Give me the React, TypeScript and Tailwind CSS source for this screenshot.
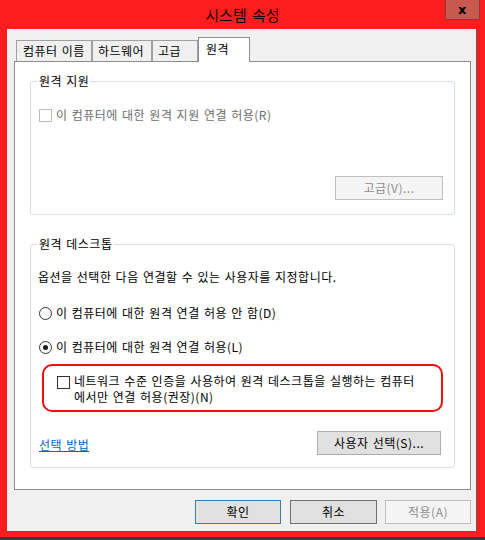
import React from "react";

function CheckBox({ disabled }: { disabled?: boolean }) {
  return (
    <span
      className={
        "inline-block w-[13px] h-[13px] shrink-0 bg-white border " +
        (disabled ? "border-[#bcbcbc]" : "border-[#333333]")
      }
    />
  );
}

function Radio({ checked }: { checked?: boolean }) {
  return (
    <span className="w-[13px] h-[13px] shrink-0 rounded-full bg-white border border-[#333333] flex items-center justify-center">
      {checked ? <span className="w-[5px] h-[5px] rounded-full bg-[#1b1b1b]" /> : null}
    </span>
  );
}

export default function App() {
  return (
    <div className="w-[485px] h-[540px] bg-[#fd1d1d] flex flex-col font-['Noto_Sans_CJK_KR','Malgun_Gothic',sans-serif] text-[12px] tracking-[0.5px] text-black overflow-hidden">
      {/* Title bar */}
      <div className="h-[29px] relative flex items-center justify-center shrink-0">
        <span className="text-[15px] leading-[18px] tracking-normal text-[#1a0000] [word-spacing:2px]">시스템 속성</span>
        <div className="absolute right-[5px] top-0 w-[35px] h-[20px] bg-[#c75a50] border border-[#8e3a33] border-t-0 flex items-center justify-center">
          <span className="font-['DejaVu_Sans',sans-serif] font-bold text-[13px] leading-[13px] text-black">x</span>
        </div>
      </div>

      {/* Client area */}
      <div className="ml-[7px] w-[470px] h-[503px] bg-[#f0f0f0] border-r border-b border-[#5a5a5a] flex flex-col shrink-0">
        {/* Tabs */}
        <div className="pt-[8px] pl-[9px] flex items-end h-[32px]">
          <div className="w-[76px] h-[21px] border border-b-0 border-[#a0a0a0] bg-[#f0f0f0] pl-[6px] flex items-center leading-[14px] [word-spacing:1px]">
            컴퓨터 이름
          </div>
          <div className="w-[60px] h-[21px] border border-b-0 border-[#a0a0a0] bg-[#f0f0f0] pl-[5px] flex items-center leading-[14px]">
            하드웨어
          </div>
          <div className="w-[46px] h-[21px] border border-b-0 border-[#a0a0a0] bg-[#f0f0f0] pl-[5px] flex items-center leading-[14px]">
            고급
          </div>
          <div className="relative z-10 -mb-px w-[52px] h-[25px] border border-b-0 border-[#8c8c8c] bg-white pl-[7px] pt-[4px] leading-[14px]">
            원격
          </div>
        </div>

        {/* Tab panel */}
        <div className="ml-[7px] w-[457px] h-[429px] border border-[#8c8c8c] bg-white px-[15px] flex flex-col">
          {/* Group 1 */}
          <fieldset className="mt-[12px] h-[141px] border border-[#d5dfe5] rounded-[3px] flex flex-col">
            <legend className="ml-[6px] px-[2px] leading-[14px] [word-spacing:1px]">원격 지원</legend>
            <div className="mt-[20px] pl-[8px] flex items-center gap-[4px] h-[14px]">
              <CheckBox disabled />
              <span className="text-[#6d6d6d] leading-[14px] [word-spacing:1px]">이 컴퓨터에 대한 원격 지원 연결 허용(R)</span>
            </div>
            <div className="mt-[54px] pr-[11px] flex justify-end">
              <div className="w-[108px] h-[24px] bg-[#f4f4f4] border border-[#bfbfbf] flex items-center justify-center text-[#8d8d8d] leading-[14px]">
                고급(V)...
              </div>
            </div>
          </fieldset>

          {/* Group 2 */}
          <fieldset className="mt-[22px] h-[231px] border border-[#d5dfe5] rounded-[3px] flex flex-col">
            <legend className="ml-[6px] px-[2px] leading-[14px] [word-spacing:1px]">원격 데스크톱</legend>
            <div className="mt-[18px] pl-[7px] leading-[16px] [word-spacing:1px]">
              옵션을 선택한 다음 연결할 수 있는 사용자를 지정합니다.
            </div>
            <div className="mt-[20px] pl-[8px] flex items-center gap-[4px] h-[16px]">
              <Radio />
              <span className="leading-[16px] [word-spacing:1px]">이 컴퓨터에 대한 원격 연결 허용 안 함(D)</span>
            </div>
            <div className="mt-[18px] pl-[8px] flex items-center gap-[4px] h-[16px]">
              <Radio checked />
              <span className="leading-[16px] [word-spacing:1px]">이 컴퓨터에 대한 원격 연결 허용(L)</span>
            </div>
            <div className="mt-[9px] ml-[11px] w-[401px] h-[48px] border-2 border-[#f20d0d] rounded-[10px] pl-[13px] pt-[7px] flex items-start gap-[4px]">
              <span className="mt-[2px]">
                <CheckBox />
              </span>
              <span className="leading-[16px] whitespace-nowrap [word-spacing:1px]">
                네트워크 수준 인증을 사용하여 원격 데스크톱을 실행하는 컴퓨터
                <br />
                에서만 연결 허용(권장)(N)
              </span>
            </div>
            <div className="mt-[19px] pl-[8px] pr-[13px] flex items-center justify-between">
              <span className="text-[#0066cc] underline leading-[16px] mt-[3px] [word-spacing:1px]">선택 방법</span>
              <div className="w-[124px] h-[24px] bg-[#e1e1e1] border border-[#adadad] flex items-center justify-center leading-[14px] [word-spacing:1px]">
                사용자 선택(S)...
              </div>
            </div>
          </fieldset>
        </div>

        {/* Bottom buttons */}
        <div className="mt-[10px] pl-[188px] flex">
          <div className="w-[86px] h-[24px] bg-[#e1e1e1] border border-[#3c7fb1] flex items-center justify-center leading-[14px]">
            확인
          </div>
          <div className="ml-[9px] w-[87px] h-[24px] bg-[#e1e1e1] border border-[#707070] flex items-center justify-center leading-[14px]">
            취소
          </div>
          <div className="ml-[8px] w-[86px] h-[24px] bg-[#f4f4f4] border border-[#bfbfbf] flex items-center justify-center text-[#8d8d8d] leading-[14px]">
            적용(A)
          </div>
        </div>
      </div>
      <div className="mt-[5px] h-[3px] bg-[#3a3a3a] shrink-0" />
    </div>
  );
}
